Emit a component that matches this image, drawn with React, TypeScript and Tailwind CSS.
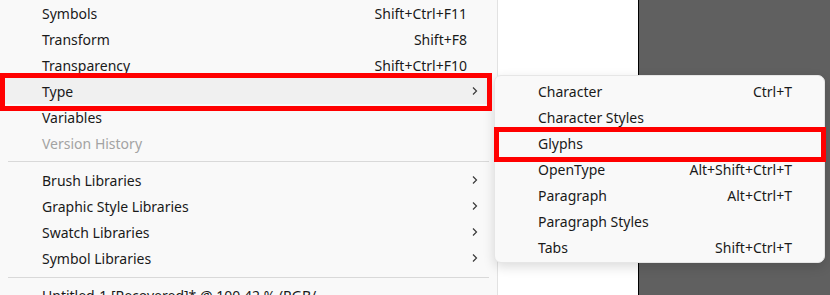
import React from "react";

type Item =
  | { kind: "item"; label: string; shortcut?: string; sub?: boolean; disabled?: boolean; hover?: boolean }
  | { kind: "sep"; cls: string };

const mainItems: Item[] = [
  { kind: "item", label: "Symbols", shortcut: "Shift+Ctrl+F11" },
  { kind: "item", label: "Transform", shortcut: "Shift+F8" },
  { kind: "item", label: "Transparency", shortcut: "Shift+Ctrl+F10" },
  { kind: "item", label: "Type", sub: true, hover: true },
  { kind: "item", label: "Variables" },
  { kind: "item", label: "Version History", disabled: true },
  { kind: "sep", cls: "mt-[5px] mb-[5px]" },
  { kind: "item", label: "Brush Libraries", sub: true },
  { kind: "item", label: "Graphic Style Libraries", sub: true },
  { kind: "item", label: "Swatch Libraries", sub: true },
  { kind: "item", label: "Symbol Libraries", sub: true },
  { kind: "sep", cls: "mt-[6px] mb-[4px]" },
  { kind: "item", label: "Untitled-1 [Recovered]* @ 100.42 % (RGB/" },
];

const typeItems = [
  { label: "Character", shortcut: "Ctrl+T" },
  { label: "Character Styles" },
  { label: "Glyphs" },
  { label: "OpenType", shortcut: "Alt+Shift+Ctrl+T" },
  { label: "Paragraph", shortcut: "Alt+Ctrl+T" },
  { label: "Paragraph Styles" },
  { label: "Tabs", shortcut: "Shift+Ctrl+T" },
];

const Chevron = () => (
  <svg width="8" height="10" viewBox="0 0 8 10" className="text-[#3a3a3a]">
    <path d="M2 1.5 L5.5 5 L2 8.5" fill="none" stroke="currentColor" strokeWidth="1.2" />
  </svg>
);

export default function App() {
  return (
    <div
      className="relative flex h-[295px] w-[830px] overflow-hidden text-[14px] text-[#1a1a1a]"
      style={{ fontFamily: '"Noto Sans", "Segoe UI", sans-serif' }}
    >
      {/* main menu */}
      <div className="w-[498px] shrink-0 border-r border-[#e2e2e2] bg-[#f9f9f9]">
        {mainItems.map((it, i) =>
          it.kind === "sep" ? (
            <div key={i} className={`mx-[8px] h-px bg-[#d9d9d9] ${it.cls}`} />
          ) : (
            <div
              key={i}
              className={`mr-[10px] flex h-[26px] items-center pl-[42px] ${
                it.sub ? "pr-[8px]" : "pr-[20px]"
              } ${it.hover ? "bg-[#f0f0f0]" : ""} ${it.disabled ? "text-[#a3a3a3]" : ""}`}
            >
              <span className="flex-1 whitespace-nowrap">{it.label}</span>
              {it.shortcut && <span className="whitespace-nowrap">{it.shortcut}</span>}
              {it.sub && <Chevron />}
            </div>
          )
        )}
      </div>

      {/* canvas */}
      <div className="w-[141px] shrink-0 border-r border-black bg-white" />
      <div className="flex-1 bg-[#606060]" />

      {/* Type submenu */}
      <div className="absolute left-[494px] top-[75px] w-[331px] rounded-[7px] border border-[#e6e6e6] bg-[#f9f9f9] pb-[2px] pt-[2px] shadow-[0_4px_12px_rgba(0,0,0,0.14)]">
        {typeItems.map((it) => (
          <div key={it.label} className="flex h-[26px] items-center pl-[43px] pr-[32px]">
            <span className="flex-1 whitespace-nowrap">{it.label}</span>
            {it.shortcut && <span className="whitespace-nowrap">{it.shortcut}</span>}
          </div>
        ))}
      </div>

      {/* annotation boxes */}
      <div className="absolute left-0 top-[73px] h-[38px] w-[492px] border-[5px] border-[#ff0000]" />
      <div className="absolute left-[494px] top-[127px] h-[35px] w-[332px] border-[5px] border-[#ff0000]" />
    </div>
  );
}
